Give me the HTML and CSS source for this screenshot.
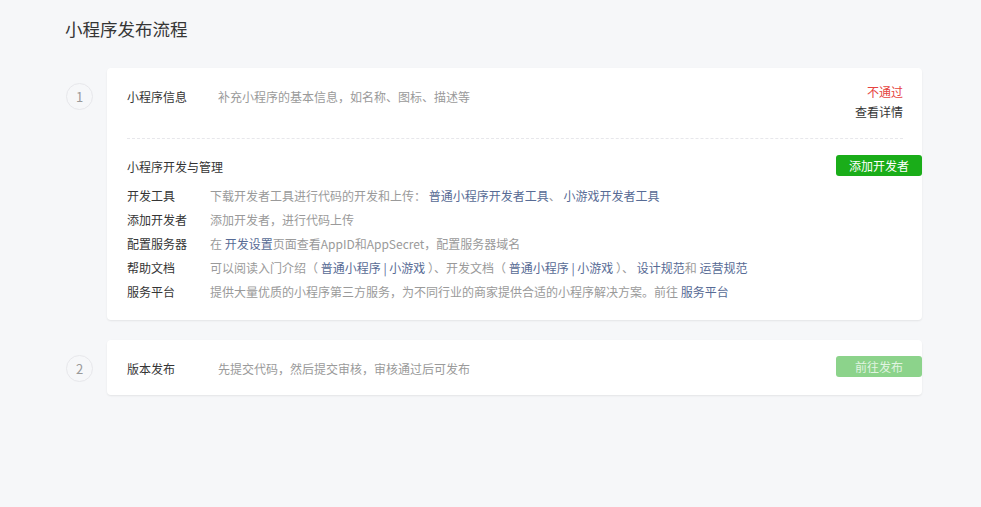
FILE: index.html
```html
<!DOCTYPE html>
<html lang="zh-CN">
<head>
<meta charset="utf-8">
<title>小程序发布流程</title>
<link rel="stylesheet" href="styles.css">
</head>
<body>
<div class="page">
  <h1 class="title">小程序发布流程</h1>

  <div class="step">
    <div class="num">1</div>
    <div class="card">
      <div class="info">
        <div class="info-left">
          <span class="info-label">小程序信息</span>
          <span class="desc">补充小程序的基本信息，如名称、图标、描述等</span>
        </div>
        <div class="info-right">
          <div class="fail">不通过</div>
          <div class="detail">查看详情</div>
        </div>
      </div>
      <div class="manage">
        <div class="manage-head">
          <span class="manage-title">小程序开发与管理</span>
          <span class="btn btn-edge">添加开发者</span>
        </div>
        <div class="row"><span class="label">开发工具</span><span class="desc">下载开发者工具进行代码的开发和上传： <a class="link">普通小程序开发者工具</a>、 <a class="link">小游戏开发者工具</a></span></div>
        <div class="row"><span class="label">添加开发者</span><span class="desc">添加开发者，进行代码上传</span></div>
        <div class="row"><span class="label">配置服务器</span><span class="desc">在 <a class="link">开发设置</a>页面查看AppID和AppSecret，配置服务器域名</span></div>
        <div class="row"><span class="label">帮助文档</span><span class="desc">可以阅读入门介绍（ <a class="link">普通小程序 | 小游戏</a> ）、开发文档（ <a class="link">普通小程序 | 小游戏</a> ）、 <a class="link">设计规范</a>和 <a class="link">运营规范</a></span></div>
        <div class="row"><span class="label">服务平台</span><span class="desc">提供大量优质的小程序第三方服务，为不同行业的商家提供合适的小程序解决方案。前往 <a class="link">服务平台</a></span></div>
      </div>
    </div>
  </div>

  <div class="step">
    <div class="num">2</div>
    <div class="card card-slim">
      <span class="info-label">版本发布</span>
      <span class="desc">先提交代码，然后提交审核，审核通过后可发布</span>
      <span class="btn btn-disabled">前往发布</span>
    </div>
  </div>
</div>
</body>
</html>
```

FILE: styles.css
```css
* { box-sizing: border-box; }
html, body {
  margin: 0;
  background: #f6f7f9;
  font-family: "Noto Sans CJK SC", "Noto Sans", "Liberation Sans", sans-serif;
  font-size: 12px;
  color: #353535;
}
.page {
  padding: 15px 0 0 65px;
  width: 922px;
}
.title {
  margin: 0 0 25px 0;
  font-size: 17.5px;
  font-weight: normal;
  line-height: 28px;
  color: #353535;
}
.step {
  display: flex;
  align-items: flex-start;
  margin-bottom: 20px;
}
.num {
  flex: none;
  width: 27px;
  height: 27px;
  margin: 15px 14px 0 1px;
  border: 1px solid #e7e7eb;
  border-radius: 50%;
  color: #9a9a9a;
  font-size: 13px;
  line-height: 25px;
  text-align: center;
}
.card {
  flex: none;
  width: 815px;
  background: #fff;
  border-radius: 4px;
  box-shadow: 0 1px 2px rgba(0, 0, 0, 0.08);
  padding: 0 19px 16px 20px;
}
.info {
  display: flex;
  justify-content: space-between;
  align-items: flex-start;
  padding: 14px 0 16px;
  border-bottom: 1px dashed #e7e7eb;
}
.info-left {
  display: flex;
  padding-top: 5px;
  line-height: 20px;
}
.info-label {
  flex: none;
  display: inline-block;
  width: 91px;
  color: #353535;
}
.desc { color: #9a9a9a; }
.info-right {
  text-align: right;
  line-height: 20px;
}
.fail { color: #e64340; }
.detail { color: #353535; }
.manage-head {
  display: flex;
  justify-content: space-between;
  align-items: center;
  padding-top: 16px;
  margin-bottom: 8px;
}
.manage-title {
  padding-top: 2px;
}
.btn {
  display: inline-block;
  width: 86px;
  height: 21px;
  line-height: 21px;
  border-radius: 3px;
  text-align: center;
  color: #fff;
  background: #1aad19;
  font-size: 12px;
}
.btn-edge { margin-right: -19px; }
.row {
  display: flex;
  line-height: 24px;
}
.label {
  flex: none;
  width: 83px;
  color: #353535;
}
.link {
  color: #576b95;
  text-decoration: none;
}
.card-slim {
  display: flex;
  align-items: center;
  height: 55px;
  padding: 0 0 0 20px;
}
.card-slim .info-label { padding-top: 2px; }
.card-slim .desc { padding-top: 2px; }
.btn-disabled {
  margin-left: auto;
  background: #8cd38b;
  color: rgba(255, 255, 255, 0.75);
  margin-top: -2px;
}
```
